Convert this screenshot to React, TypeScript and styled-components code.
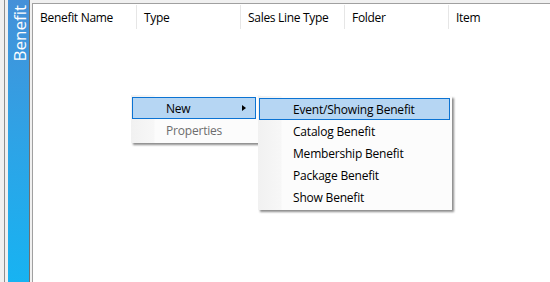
import styled, { createGlobalStyle } from "styled-components"

const GlobalStyle = createGlobalStyle`
  html, body {
    margin: 0;
    padding: 0;
    overflow: hidden;
  }
  body {
    font-family: "Open Sans", "Noto Sans", sans-serif;
    font-size: 12px;
    color: #000;
  }
`

const Page = styled.div`
  display: flex;
  height: 282px;
  width: 550px;
  background: #f0f0f0;
  padding-left: 4px;
  box-sizing: border-box;
`

const SideTab = styled.div`
  display: flex;
  width: 26px;
  border-left: 1px solid #8e8e8e;
  padding-left: 3px;
  box-sizing: border-box;
`

const TabFace = styled.div`
  width: 21px;
  border-right: 1px solid #6f6f6f;
  background: linear-gradient(to bottom, #4590d8 0%, #2ea3e6 50%, #17b3f2 100%);
  display: flex;
  justify-content: center;
  align-items: flex-start;
`

const TabLabel = styled.div`
  writing-mode: vertical-rl;
  transform: rotate(180deg);
  color: #fff;
  font-family: "Open Sans", "Noto Sans", sans-serif;
  font-size: 17px;
  line-height: 21px;
  margin-top: 5px;
  margin-left: 1px;
`

const Main = styled.div`
  position: relative;
  flex: 1;
  margin-top: 3px;
  margin-left: 2px;
  background: #fff;
  border-top: 1px solid #a0a0a0;
  border-left: 1px solid #a0a0a0;
`

const Header = styled.div`
  display: grid;
  grid-template-columns: repeat(5, 104px);
  padding-top: 1px;
`

const HeaderCell = styled.div`
  height: 24px;
  line-height: 25px;
  padding-left: 7px;
  border-right: 1px solid #e6e6e6;
  white-space: nowrap;
  letter-spacing: -0.3px;
  &:last-child {
    border-right: none;
  }
`

const Menu = styled.div<{ $left: number; $top: number; $width: number }>`
  position: absolute;
  left: ${(p) => p.$left}px;
  top: ${(p) => p.$top}px;
  width: ${(p) => p.$width}px;
  padding: 2px 2px 2px 1px;
  background:
    linear-gradient(to right, #f1f1f1 0px, #f7f7f7 23px, #fcfcfc 24px) no-repeat;
  box-shadow: 2px 2px 2px rgba(0, 0, 0, 0.45);
`

const MenuItem = styled.div<{ $active?: boolean; $disabled?: boolean }>`
  position: relative;
  height: 22px;
  line-height: 21px;
  box-sizing: border-box;
  padding-left: 33px;
  border: 1px solid ${(p) => (p.$active ? "#0b73d3" : "transparent")};
  background: ${(p) => (p.$active ? "#b6d6f3" : "transparent")};
  color: ${(p) => (p.$disabled ? "#6d6d6d" : "#000")};
  white-space: nowrap;
  letter-spacing: -0.2px;
`

const SubArrow = styled.span`
  position: absolute;
  right: 9px;
  top: 7px;
  width: 0;
  height: 0;
  border-top: 3.5px solid transparent;
  border-bottom: 3.5px solid transparent;
  border-left: 4px solid #000;
`

const columns = ["Benefit Name", "Type", "Sales Line Type", "Folder", "Item"]
const subItems = [
  "Event/Showing Benefit",
  "Catalog Benefit",
  "Membership Benefit",
  "Package Benefit",
  "Show Benefit",
]

const App = () => {
  return (
    <>
      <GlobalStyle />
      <Page>
        <SideTab>
          <TabFace>
            <TabLabel>Benefit</TabLabel>
          </TabFace>
        </SideTab>
        <Main>
          <Header>
            {columns.map((c) => (
              <HeaderCell key={c}>{c}</HeaderCell>
            ))}
          </Header>
          <Menu $left={98} $top={91} $width={124}>
            <MenuItem $active>
              New
              <SubArrow />
            </MenuItem>
            <MenuItem $disabled>Properties</MenuItem>
          </Menu>
          <Menu $left={225} $top={92} $width={191}>
            {subItems.map((s, idx) => (
              <MenuItem key={s} $active={idx == 0}>
                {s}
              </MenuItem>
            ))}
          </Menu>
        </Main>
      </Page>
    </>
  )
}

export default App
